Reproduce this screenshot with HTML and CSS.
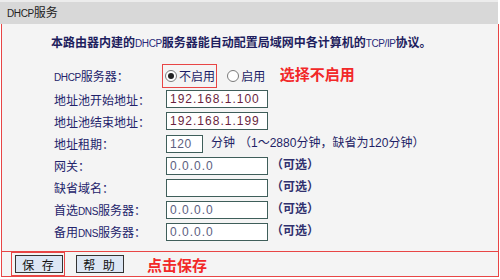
FILE: index.html
```html
<!DOCTYPE html>
<html lang="zh-CN">
<head>
    <meta charset="UTF-8">
    <title>DHCP服务</title>
    <link rel="stylesheet" href="styles.css">
</head>
<body>

    <div class="title"><span class="latin">DHCP</span>服务</div>

    <div class="panel">
        <p class="intro">本路由器内建的<span class="latin">DHCP</span>服务器能自动配置局域网中各计算机的<span class="latin">TCP/IP</span>协议。</p>

        <table class="form">
            <tr class="row-radio">
                <td class="label"><span class="latin">DHCP</span>服务器：</td>
                <td>
                    <span class="mark">
                        <label class="radio"><input type="radio" name="dhcp" checked>不启用</label>
                    </span>
                    <label class="radio"><input type="radio" name="dhcp">启用</label>
                    <span class="note">选择不启用</span>
                </td>
            </tr>
            <tr>
                <td class="label">地址池开始地址：</td>
                <td><input class="field ip" type="text" value="192.168.1.100"></td>
            </tr>
            <tr>
                <td class="label">地址池结束地址：</td>
                <td><input class="field ip" type="text" value="192.168.1.199"></td>
            </tr>
            <tr>
                <td class="label">地址租期：</td>
                <td><input class="field short" type="text" value="120"><span class="unit">分钟</span><span class="hint">（1～2880分钟，缺省为120分钟）</span></td>
            </tr>
            <tr>
                <td class="label">网关：</td>
                <td><input class="field" type="text" value="0.0.0.0"><span class="opt">（可选）</span></td>
            </tr>
            <tr>
                <td class="label">缺省域名：</td>
                <td><input class="field" type="text" value=""><span class="opt">（可选）</span></td>
            </tr>
            <tr>
                <td class="label">首选<span class="latin">DNS</span>服务器：</td>
                <td><input class="field" type="text" value="0.0.0.0"><span class="opt">（可选）</span></td>
            </tr>
            <tr>
                <td class="label">备用<span class="latin">DNS</span>服务器：</td>
                <td><input class="field" type="text" value="0.0.0.0"><span class="opt">（可选）</span></td>
            </tr>
        </table>

        <div class="actions">
            <span class="mark-btn"><button class="btn">保 存</button></span>
            <button class="btn">帮 助</button>
            <span class="note note-save">点击保存</span>
        </div>
    </div>

</body>
</html>
```

FILE: styles.css
```css
body {
    margin: 0;
    padding: 0;
    background-color: #fff;
    font-family: "Liberation Sans", "Noto Sans CJK SC", sans-serif;
    font-size: 12px;
    color: #1f1f66;
}

.latin {
    font-size: 10px;
    letter-spacing: -0.4px;
}

.title {
    height: 22px;
    line-height: 22px;
    border-top: 2px solid #ececec;
    background-color: #d8d8d8;
    padding-left: 7px;
    margin-right: 2px;
    color: #222;
}

.panel {
    margin: 0 1px;
    background-color: #f4f4f4;
    border-left: 1px solid #e84545;
    border-right: 1px solid #e84545;
    border-bottom: 1px solid #e84545;
    height: 253px;
    box-sizing: border-box;
}

.intro {
    margin: 0;
    padding: 10px 0 0 49px;
    height: 28px;
    line-height: 18px;
    box-sizing: border-box;
    font-weight: bold;
    color: #1e1e5e;
}

.intro .latin {
    font-weight: normal;
    color: #2a2a7a;
}

.form {
    border-collapse: collapse;
    margin: 10px 0 0 52px;
}

.form td {
    padding: 0;
    height: 22px;
    vertical-align: middle;
}

.form .row-radio td {
    height: 26px;
}

.label {
    width: 112px;
    color: #23236b;
}

.mark {
    display: inline-block;
    border: 1px solid #e84545;
    padding: 2px 1px 2px 2px;
    margin-left: -4px;
}

.radio {
    display: inline-flex;
    align-items: center;
    color: #1d1d66;
}

.radio input {
    appearance: none;
    width: 12px;
    height: 12px;
    margin: 0 2px 0 0;
    border: 1px solid #7a7a7a;
    border-radius: 50%;
    background-color: #fff;
    box-sizing: border-box;
    position: relative;
}

.radio input:checked::after {
    content: "";
    position: absolute;
    left: 2px;
    top: 2px;
    width: 6px;
    height: 6px;
    border-radius: 50%;
    background-color: #222;
}

.mark + .radio {
    margin-left: 7px;
}

.note {
    margin-left: 11px;
    font-size: 15px;
    font-weight: bold;
    color: #f22828;
    vertical-align: 2px;
}

.field {
    width: 102px;
    height: 18px;
    margin: 0;
    padding: 0 3px;
    box-sizing: border-box;
    border: 1px solid #3f5e5a;
    background-color: #fff;
    font-family: "Liberation Sans", "Noto Sans CJK SC", sans-serif;
    font-size: 12px;
    letter-spacing: 1px;
    color: #5c6080;
    vertical-align: middle;
}

.field.ip {
    color: #6a1f3e;
}

.field.short {
    width: 37px;
    letter-spacing: 0.6px;
}

.unit {
    margin-left: 8px;
    color: #1f1f66;
}

.hint {
    margin-left: 4px;
    color: #1f1f66;
}

.opt {
    margin-left: 3px;
    font-weight: bold;
    color: #30306e;
}

.actions {
    margin-top: 9px;
    border-top: 1px solid #e84545;
    height: 24px;
    display: flex;
    align-items: center;
    padding-left: 9px;
}

.mark-btn {
    display: inline-block;
    border: 1px solid #e84545;
    padding: 2px 1px 2px 3px;
    line-height: 0;
}

.btn {
    width: 48px;
    height: 18px;
    padding: 0;
    background-color: #dce6f4;
    border: 1px solid #333;
    font-family: "Liberation Sans", "Noto Sans CJK SC", sans-serif;
    font-size: 12px;
    color: #111;
    letter-spacing: 2px;
}

.mark-btn + .btn {
    margin-left: 11px;
}

.note-save {
    margin-left: 23px;
    vertical-align: 0;
}
```
